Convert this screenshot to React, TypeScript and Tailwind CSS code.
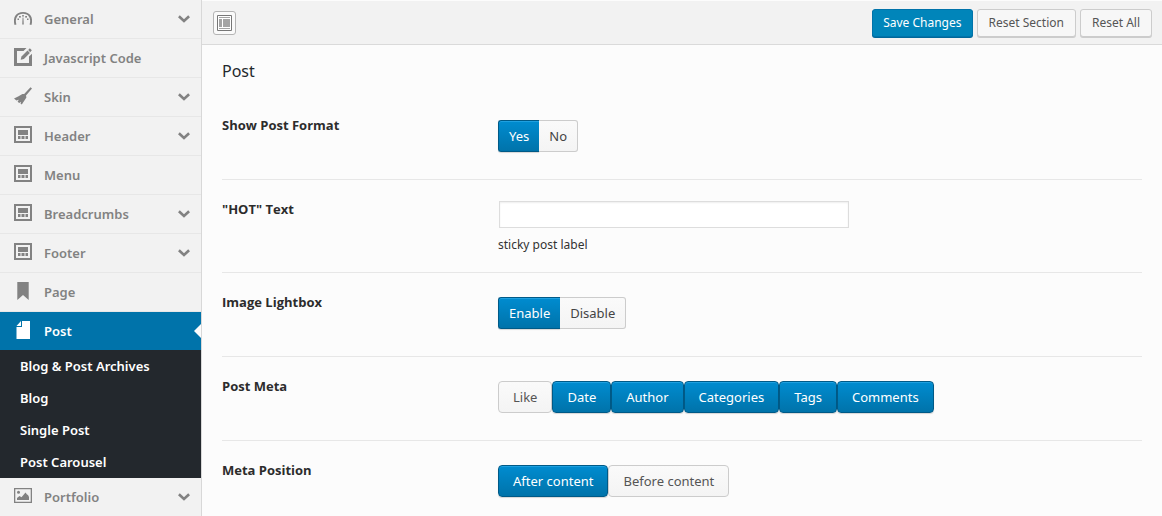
import { useState } from "react";
import type { ReactNode } from "react";

function GaugeIcon() {
  return (
    <svg width="18" height="18" viewBox="0 0 18 18" className="mb-0.5" fill="currentColor" aria-hidden="true">
      <path d="M1.500 15.800C-.6 8.500 3 3.900 9 3.900s9.600 4.600 7.500 11.900" fill="none" stroke="currentColor" strokeWidth="1.900" />
      <path d="M8.500 8.500h1l.5 7H8z" opacity=".8" />
      <rect x="8.200" y="6" width="1.600" height="1.600" />
      <rect x="5" y="7" width="1.800" height="1.600" />
      <rect x="11.200" y="7" width="1.800" height="1.600" />
      <rect x="3.500" y="9.500" width="1.500" height="1.500" />
      <rect x="13" y="9.500" width="1.500" height="1.500" />
    </svg>
  );
}

function EditIcon() {
  return (
    <svg width="18" height="18" viewBox="0 0 18 18" className="mb-0.5" fill="currentColor" aria-hidden="true">
      <path d="M0 0h12.500L9.500 3H3v12h12V8.500l3-2.700V18H0z" />
      <path d="M6.600 11.800l.9-3.300 6-6 2.400 2.400-6 6z" />
      <path d="M14.200 1.900L15.800.3l2 2-1.600 1.900z" />
    </svg>
  );
}

function BroomIcon() {
  return (
    <svg width="18" height="18" viewBox="0 0 18 18" className="mb-0.5" fill="currentColor" aria-hidden="true">
      <path d="M16.500.2L18 1.600 12 8.600l.4 1.800-4.600 7.200-1.300-1.200.6-1.700-1.900 1.400-1.600-1.300 1.200-2-2.400.8L0 11.600 4.600 9.200l3.800-2.300 1.800.2z" />
    </svg>
  );
}

function PanelIcon() {
  return (
    <svg width="18" height="18" viewBox="0 0 18 18" className="mb-0.5" fill="currentColor" aria-hidden="true">
      <path d="M0 0h18v17H0zM2 2v13h14V2z" fillRule="evenodd" />
      <path d="M4 4h10v5H4zM4 10h2.500v3H4zM7.500 10h3v3h-3zM11.500 10H14v3h-2.500z" />
    </svg>
  );
}

function BookmarkIcon() {
  return (
    <svg width="18" height="18" viewBox="0 0 18 18" className="mb-0.5" fill="currentColor" aria-hidden="true">
      <path d="M3.300 0h11.400v18L9 13l-5.700 5z" />
    </svg>
  );
}

function FileIcon() {
  return (
    <svg width="18" height="18" viewBox="0 0 18 18" className="mb-0.5" fill="currentColor" aria-hidden="true">
      <path d="M8 0h8v18H2.500V6H8z" />
      <path d="M7 0v5H2.500z" />
    </svg>
  );
}

function PictureIcon() {
  return (
    <svg width="18" height="18" viewBox="0 0 18 18" className="mb-0.5" fill="currentColor" aria-hidden="true">
      <path d="M0 1h18v15H0zM1.300 2.300v12.400h15.400V2.300z" fillRule="evenodd" />
      <circle cx="4.500" cy="5.300" r="1.500" />
      <path d="M3 13v-2l2.500-2 2 1.200L11.500 5.500l1.500 2 1 .5 1 2V13z" />
    </svg>
  );
}

function Chevron() {
  return (
    <svg width="12" height="8" viewBox="0 0 12 8" fill="none" stroke="currentColor" strokeWidth="2.600" aria-hidden="true">
      <path d="M.9 1.200L6 6l5.100-4.800" />
    </svg>
  );
}

function LayoutIcon() {
  return (
    <svg width="15" height="16" viewBox="0 0 15 16" aria-hidden="true">
      <path d="M.5.500h14v15H.5z" fill="#fff" stroke="#777" />
      <path d="M2 2h11v1H2zM2 13h11v1H2zM2 4h3v8H2zM6 4h7v8H6z" fill="#a4a4a4" />
    </svg>
  );
}

type Item = { label: string; icon: ReactNode; expandable?: boolean; children?: string[] };

const items: Item[] = [
  { label: "General", icon: <GaugeIcon />, expandable: true },
  { label: "Javascript Code", icon: <EditIcon /> },
  { label: "Skin", icon: <BroomIcon />, expandable: true },
  { label: "Header", icon: <PanelIcon />, expandable: true },
  { label: "Menu", icon: <PanelIcon /> },
  { label: "Breadcrumbs", icon: <PanelIcon />, expandable: true },
  { label: "Footer", icon: <PanelIcon />, expandable: true },
  { label: "Page", icon: <BookmarkIcon /> },
  {
    label: "Post",
    icon: <FileIcon />,
    children: ["Blog & Post Archives", "Blog", "Single Post", "Post Carousel"],
  },
  { label: "Portfolio", icon: <PictureIcon />, expandable: true },
];

function Sidebar() {
  return (
    <nav className="w-[202px] shrink-0 border-r border-[#d8d8d8] bg-[#f2f2f2] font-['Noto_Sans','Open_Sans',sans-serif] font-semibold">
      <ul>
        {items.map((item) =>
          item.children ? (
            <li key={item.label}>
              <a href="#" className="relative flex h-[38px] items-center gap-3 bg-[#0073aa] pl-3.5 text-white">
                {item.icon}
                <span className="pt-0.5">{item.label}</span>
                <span className="absolute top-3 right-0 border-y-[7px] border-r-[7px] border-y-transparent border-r-[#fcfcfc]" />
              </a>
              <ul className="bg-[#23282d]">
                {item.children.map((child) => (
                  <li key={child}>
                    <a href="#" className="flex h-8 items-center pt-0.5 pl-5 text-white">
                      {child}
                    </a>
                  </li>
                ))}
              </ul>
            </li>
          ) : (
            <li key={item.label} className="border-b border-[#e7e7e7]">
              <a href="#" className="flex h-[38px] items-center gap-3 pr-[11px] pl-3.5 text-[#828282]">
                {item.icon}
                <span className="grow pt-0.5">{item.label}</span>
                {item.expandable && <Chevron />}
              </a>
            </li>
          ),
        )}
      </ul>
    </nav>
  );
}

const primary =
  "border-[#005a87] bg-linear-to-b from-[#008cd0] to-[#0073aa] text-white shadow-[inset_0_1px_0_#1ea0e0,0_1px_1px_rgba(0,0,0,0.15)]";
const plain = "border-[#ccc] bg-linear-to-b from-[#fafafa] to-[#f4f4f4]";

function Segments({ name, options, initial }: { name: string; options: string[]; initial: string }) {
  const [value, setValue] = useState(initial);
  return (
    <div className="flex" role="radiogroup" aria-label={name}>
      {options.map((option) => (
        <label
          key={option}
          className={`relative flex h-8 cursor-pointer items-center border px-2.5 pt-0.5 first:rounded-l-[3px] last:rounded-r-[3px] last:border-l-0 first:border-r-0 ${value === option ? primary : `${plain} text-[#444]`}`}
        >
          <input
            type="radio"
            name={name}
            className="sr-only"
            checked={value === option}
            onChange={() => setValue(option)}
          />
          {option}
        </label>
      ))}
    </div>
  );
}

function Toggles({ name, options, initial, single }: { name: string; options: string[]; initial: string[]; single?: boolean }) {
  const [values, setValues] = useState(initial);
  const toggle = (option: string) =>
    setValues(
      single ? [option] : values.includes(option) ? values.filter((v) => v !== option) : [...values, option],
    );
  return (
    <div className="flex flex-wrap" role="group" aria-label={name}>
      {options.map((option) => (
        <label
          key={option}
          className={`relative flex h-8 cursor-pointer items-center rounded-[4px] border px-3.5 pt-0.5 ${values.includes(option) ? primary : `${plain} text-[#555]`}`}
        >
          <input
            type={single ? "radio" : "checkbox"}
            name={name}
            className="sr-only"
            checked={values.includes(option)}
            onChange={() => toggle(option)}
          />
          {option}
        </label>
      ))}
    </div>
  );
}

function Field({ label, htmlFor, children }: { label: string; htmlFor?: string; children: ReactNode }) {
  const heading =
    "w-[276px] shrink-0 pt-5 leading-[18px] font-bold text-[#2c2c2c] font-['Open_Sans','Noto_Sans',sans-serif]";
  return (
    <div className="flex border-b border-[#e7e7e7]">
      {htmlFor ? (
        <label htmlFor={htmlFor} className={heading}>
          {label}
        </label>
      ) : (
        <div className={heading}>{label}</div>
      )}
      {children}
    </div>
  );
}

export default function App() {
  return (
    <div className="flex min-h-screen bg-[#fcfcfc] font-['Noto_Sans','Open_Sans',sans-serif] text-[13px]">
      <Sidebar />
      <main className="min-w-0 grow">
        <header className="flex h-[45px] items-center border-t border-b border-t-[#fcfcfc] border-b-[#dadada] bg-[#f2f2f2] px-2.5">
          <button
            type="button"
            aria-label="Expand all options"
            className="ml-px flex h-6 w-[23px] items-center justify-center rounded-[3px] border border-[#b4b4b4] bg-[#fafafa]"
          >
            <LayoutIcon />
          </button>
          <div className="ml-auto flex gap-1 text-[12px]">
            <button
              type="button"
              className="h-7 rounded-[3px] border border-[#0073aa] bg-[#0085ba] px-2.5 text-white shadow-[0_1px_0_#006799]"
            >
              Save Changes
            </button>
            <button type="button" className="h-7 rounded-[3px] border border-[#ccc] bg-[#f7f7f7] px-[11px] text-[#555] shadow-[0_1px_0_#ccc]">
              Reset Section
            </button>
            <button type="button" className="h-7 rounded-[3px] border border-[#ccc] bg-[#f7f7f7] px-[11px] text-[#555] shadow-[0_1px_0_#ccc]">
              Reset All
            </button>
          </div>
        </header>
        <div className="px-5">
          <h1 className="pt-3.5 pb-[13px] text-[16px] leading-6 text-[#23282d]">Post</h1>
          <Field label="Show Post Format">
            <div className="pt-6 pb-[27px]">
              <Segments name="Show Post Format" options={["Yes", "No"]} initial="Yes" />
            </div>
          </Field>
          <Field label={'"HOT" Text'} htmlFor="hot-text">
            <div className="grow pt-[21px] pb-[18px]">
              <input
                id="hot-text"
                type="text"
                className="ml-px block h-[27px] w-full max-w-[350px] border border-[#ddd] bg-white px-1.5 shadow-[inset_0_1px_2px_rgba(0,0,0,0.07)]"
              />
              <p className="pt-2 text-[12px] leading-[18px] text-[#333]">sticky post label</p>
            </div>
          </Field>
          <Field label="Image Lightbox">
            <div className="pt-6 pb-[27px]">
              <Segments name="Image Lightbox" options={["Enable", "Disable"]} initial="Enable" />
            </div>
          </Field>
          <Field label="Post Meta">
            <div className="pt-6 pb-[27px]">
              <Toggles
                name="Post Meta"
                options={["Like", "Date", "Author", "Categories", "Tags", "Comments"]}
                initial={["Date", "Author", "Categories", "Tags", "Comments"]}
              />
            </div>
          </Field>
          <Field label="Meta Position">
            <div className="pt-6 pb-[27px]">
              <Toggles
                name="Meta Position"
                options={["After content", "Before content"]}
                initial={["After content"]}
                single
              />
            </div>
          </Field>
        </div>
      </main>
    </div>
  );
}
